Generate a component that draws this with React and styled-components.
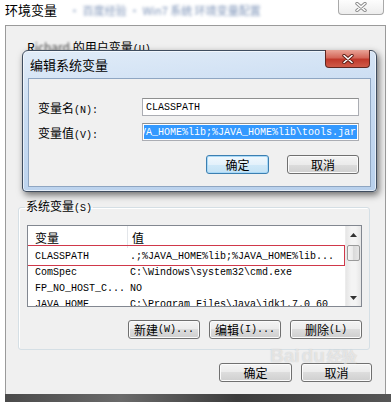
import React from 'react';
import styled, { createGlobalStyle } from 'styled-components';

const GlobalStyle = createGlobalStyle`
  html, body { margin: 0; padding: 0; background: #fff; }
  body {
    font-family: "Noto Sans CJK SC", "Liberation Sans", sans-serif;
    font-size: 12px;
    color: #000;
  }
  * { box-sizing: border-box; }
`;

const Screen = styled.div`
  position: relative;
  width: 391px;
  height: 402px;
  display: flex;
  flex-direction: column;
  background: #fff;
  overflow: hidden;
`;

const TopBar = styled.div`
  flex: 0 0 25px;
  display: flex;
  align-items: flex-start;
  padding-left: 5px;
`;

const WinTitle = styled.div`
  font-size: 13px;
  line-height: 16px;
  margin-top: 2px;
  white-space: nowrap;
`;

const Smudge = styled.span`
  display: inline-block;
  filter: blur(${p => p.$r || 1.8}px);
  color: ${p => p.$c || '#7f95b9'};
  margin-left: ${p => p.$ml || 0}px;
  font-size: ${p => p.$fs || 11}px;
`;

const GhostClose = styled.div`
  margin-left: auto;
  margin-right: 7px;
  width: 46px;
  height: 15px;
  border: 1px solid #a9a9a9;
  border-top: none;
  border-radius: 0 0 4px 4px;
  display: flex;
  align-items: center;
  justify-content: center;
  background: linear-gradient(#fdfdfd, #ededed);
`;

const Panel = styled.div`
  flex: 1;
  margin: 0 5px;
  background: #f0f0f0;
  border: 1px solid #9a9a9a;
  border-bottom: none;
  display: flex;
  flex-direction: column;
  padding: 14px 13px 12px 12px;
`;

const BottomBand = styled.div`
  flex: 0 0 8px;
  margin-left: 5px;
  background: linear-gradient(90deg, #4a4a4a, #6a6a6a 30%, #3c3c3c 60%, #565656);
`;

const UserArea = styled.div`
  height: 159px;
  padding-left: 9px;
  font-size: 12px;
  line-height: 14px;
`;

const M = styled.span`
  font-family: "Liberation Mono", "DejaVu Sans Mono", monospace;
  font-size: 10px;
`;

const Group = styled.fieldset`
  margin: 0 2px 0 0;
  padding: 9px 7px 10px 8px;
  border: 1px solid #d5dfe5;
  border-radius: 3px;
  box-shadow: inset 1px 1px 0 #fff;
  min-width: 0;
`;

const Legend = styled.legend`
  padding: 0 1px;
  margin-left: -2px;
  font-size: 12px;
  line-height: 14px;
`;

const ListBox = styled.div`
  height: 82px;
  display: flex;
  background: #fff;
  border: 1px solid #828790;
  overflow: hidden;
`;

const ListBody = styled.div`
  flex: 1;
  display: flex;
  flex-direction: column;
  min-width: 0;
`;

const HeadRow = styled.div`
  flex: 0 0 22px;
  display: grid;
  grid-template-columns: 100px 1fr;
  align-items: stretch;
`;

const HeadCell = styled.div`
  display: flex;
  align-items: center;
  padding-left: ${p => p.$pl}px;
  font-size: 12px;
  border-right: ${p => (p.$sep ? '1px solid #e3e6ea' : 'none')};
`;

const Row = styled.div`
  position: relative;
  flex: 0 0 16px;
  display: grid;
  grid-template-columns: 100px 1fr;
  align-items: center;
  font-family: "Liberation Mono", "DejaVu Sans Mono", monospace;
  font-size: 10px;
  white-space: nowrap;
  &::after {
    content: '';
    display: ${p => (p.$marked ? 'block' : 'none')};
    position: absolute;
    left: -1px;
    right: 0;
    top: -3px;
    bottom: -2px;
    border: 1px solid #d0384a;
    pointer-events: none;
  }
`;

const Cell = styled.div`
  padding-left: ${p => p.$pl}px;
  overflow: hidden;
`;

const VScroll = styled.div`
  flex: 0 0 16px;
  display: flex;
  flex-direction: column;
  background: linear-gradient(90deg, #e6e6e6, #f4f4f4 35%, #f4f4f4 65%, #e6e6e6);
  border-left: 1px solid #ececec;
`;

const ScrollBtn = styled.div`
  flex: 0 0 17px;
  display: flex;
  align-items: center;
  justify-content: center;
  margin-top: ${p => (p.$end ? 'auto' : '0')};
`;

const Thumb = styled.div`
  flex: 0 0 16px;
  margin: 2px 1px 0;
  border: 1px solid #9a9a9a;
  border-radius: 2px;
  background: linear-gradient(90deg, #f6f6f6, #e9e9e9 50%, #dadada 50%, #e6e6e6);
`;

const BtnRow = styled.div`
  display: flex;
  justify-content: flex-end;
  gap: ${p => p.$gap || 9}px;
  margin-top: ${p => p.$mt || 0}px;
`;

const WinBtn = styled.div`
  width: ${p => p.$w || 72}px;
  height: 19px;
  border: 1px solid ${p => (p.$primary ? '#3c7fb1' : '#707070')};
  border-radius: 3px;
  display: flex;
  align-items: center;
  justify-content: center;
  font-size: 12px;
  line-height: 1;
  white-space: nowrap;
  background: ${p =>
    p.$primary
      ? 'linear-gradient(#f1f8fd, #e3f1fb 50%, #d0e9f8 50%, #c4e2f5)'
      : 'linear-gradient(#f4f4f4, #ebebeb 50%, #dddddd 50%, #cfcfcf)'};
  box-shadow: inset 0 0 0 1px ${p => (p.$primary ? '#a9d9f7' : '#fbfbfb')};
`;

const BottomBtns = styled(BtnRow)`
  margin-top: auto;
`;

/* edit dialog sits on top of the main window */
const Dialog = styled.div`
  position: absolute;
  left: 22px;
  top: 50px;
  width: 355px;
  height: 142px;
  border: 1px solid #3f4d5f;
  border-radius: 6px 6px 4px 4px;
  background: linear-gradient(175deg, #e1ecf8 0%, #c9dcf2 40%, #b8d0ec 100%);
  box-shadow: 2px 3px 7px rgba(0, 0, 0, 0.55), inset 0 0 0 1px rgba(255, 255, 255, 0.6);
  display: flex;
  flex-direction: column;
  padding: 0 5px 4px 5px;
`;

const DlgTitle = styled.div`
  flex: 0 0 27px;
  display: flex;
  align-items: center;
  padding-left: 2px;
  font-size: 13px;
`;

const RedClose = styled.div`
  position: absolute;
  top: -1px;
  right: 6px;
  width: 45px;
  height: 18px;
  border: 1px solid #5e2620;
  border-top: none;
  border-radius: 0 0 4px 4px;
  background: linear-gradient(#e9a497, #d4685a 45%, #c0392b 55%, #cf5a48);
  display: flex;
  align-items: center;
  justify-content: center;
`;

const Client = styled.div`
  flex: 1;
  background: #f0f0f0;
  border: 1px solid #8fa6c2;
  padding: 19px 11px 0 9px;
  display: flex;
  flex-direction: column;
`;

const Field = styled.div`
  display: flex;
  align-items: center;
  height: 18px;
  margin-bottom: 7px;
`;

const FieldLabel = styled.div`
  flex: 0 0 104px;
  font-size: 12px;
`;

const Input = styled.div`
  flex: 0 0 217px;
  height: 18px;
  border: 1px solid #abadb3;
  border-top-color: #8e8f8f;
  background: #fff;
  display: flex;
  align-items: center;
  justify-content: ${p => (p.$end ? 'flex-end' : 'flex-start')};
  padding: 1px;
  overflow: hidden;
  white-space: nowrap;
  font-family: "Liberation Mono", "DejaVu Sans Mono", monospace;
  font-size: 10px;
`;

const Plain = styled.span`
  padding-left: 2px;
`;

const Selected = styled.span`
  display: flex;
  align-items: center;
  justify-content: flex-end;
  flex: 1;
  height: 14px;
  background: #3399ff;
  color: #fff;
  overflow: hidden;
  padding-right: 1px;
`;

const Watermark = styled.div`
  position: absolute;
  left: 270px;
  top: 345px;
  display: flex;
  align-items: flex-end;
  gap: 2px;
  font-family: "Liberation Sans", sans-serif;
  font-weight: bold;
  font-size: 19px;
  color: rgba(255, 255, 255, 0.55);
  text-shadow: 0 0 1px rgba(110, 110, 110, 0.35);
  pointer-events: none;
`;

const Glyph = ({ c = '#777' }) => (
  <svg width="14" height="10" viewBox="0 0 14 10">
    <path d="M3 1.5 L11 8.5 M11 1.5 L3 8.5" stroke={c} strokeWidth="3.4" strokeLinecap="round" />
    <path d="M3 1.5 L11 8.5 M11 1.5 L3 8.5" stroke="#fff" strokeWidth="1.6" strokeLinecap="round" />
  </svg>
);

const Arrow = ({ down }) => (
  <svg width="7" height="4" viewBox="0 0 7 4">
    <path d={down ? 'M0 0 H7 L3.5 4 Z' : 'M0 4 H7 L3.5 0 Z'} fill="#333" />
  </svg>
);

const sysVars = [
  { name: 'CLASSPATH', value: '.;%JAVA_HOME%lib;%JAVA_HOME%lib...', marked: true },
  { name: 'ComSpec', value: 'C:\\Windows\\system32\\cmd.exe' },
  { name: 'FP_NO_HOST_C...', value: 'NO' },
  { name: 'JAVA_HOME', value: 'C:\\Program Files\\Java\\jdk1.7.0_60' },
];

export default function App() {
  return (
    <Screen>
      <GlobalStyle />
      <TopBar>
        <WinTitle>
          环境变量
          <Smudge $ml={12}>· 百度经验 · Win7 系统 环境变量配置</Smudge>
        </WinTitle>
        <GhostClose>
          <Glyph c="#8a8a8a" />
        </GhostClose>
      </TopBar>

      <Panel>
        <UserArea>
          R<Smudge $c="#555" $r={1.2} $fs={12}>ichard</Smudge> 的用户变量<M>(U)</M>
        </UserArea>

        <Group>
          <Legend>系统变量<M>(S)</M></Legend>
          <ListBox>
            <ListBody>
              <HeadRow>
                <HeadCell $pl={7} $sep>变量</HeadCell>
                <HeadCell $pl={4}>值</HeadCell>
              </HeadRow>
              {sysVars.map(v => (
                <Row key={v.name} $marked={v.marked}>
                  <Cell $pl={7}>{v.name}</Cell>
                  <Cell $pl={2}>{v.value}</Cell>
                </Row>
              ))}
            </ListBody>
            <VScroll>
              <ScrollBtn><Arrow /></ScrollBtn>
              <Thumb />
              <ScrollBtn $end><Arrow down /></ScrollBtn>
            </VScroll>
          </ListBox>
          <BtnRow $mt={13} $gap={9}>
            <WinBtn>新建<M>(W)...</M></WinBtn>
            <WinBtn>编辑<M>(I)...</M></WinBtn>
            <WinBtn>删除<M>(L)</M></WinBtn>
          </BtnRow>
        </Group>

        <BottomBtns $gap={9}>
          <WinBtn $w={73}>确定</WinBtn>
          <WinBtn $w={71}>取消</WinBtn>
        </BottomBtns>
      </Panel>
      <BottomBand />

      <Watermark>
        <span>Bai</span>
        <span>du</span>
        <span style={{ fontSize: 15 }}>经验</span>
      </Watermark>

      <Dialog>
        <DlgTitle>编辑系统变量</DlgTitle>
        <RedClose>
          <Glyph c="#5a1a12" />
        </RedClose>
        <Client>
          <Field>
            <FieldLabel>变量名<M>(N):</M></FieldLabel>
            <Input><Plain>CLASSPATH</Plain></Input>
          </Field>
          <Field>
            <FieldLabel>变量值<M>(V):</M></FieldLabel>
            <Input $end>
              <Selected>{'.;%JAVA_HOME%lib;%JAVA_HOME%lib\\tools.jar'}</Selected>
            </Input>
          </Field>
          <BtnRow $mt={7} $gap={18}>
            <WinBtn $w={63} $primary>确定</WinBtn>
            <WinBtn $w={72}>取消</WinBtn>
          </BtnRow>
        </Client>
      </Dialog>
    </Screen>
  );
}
